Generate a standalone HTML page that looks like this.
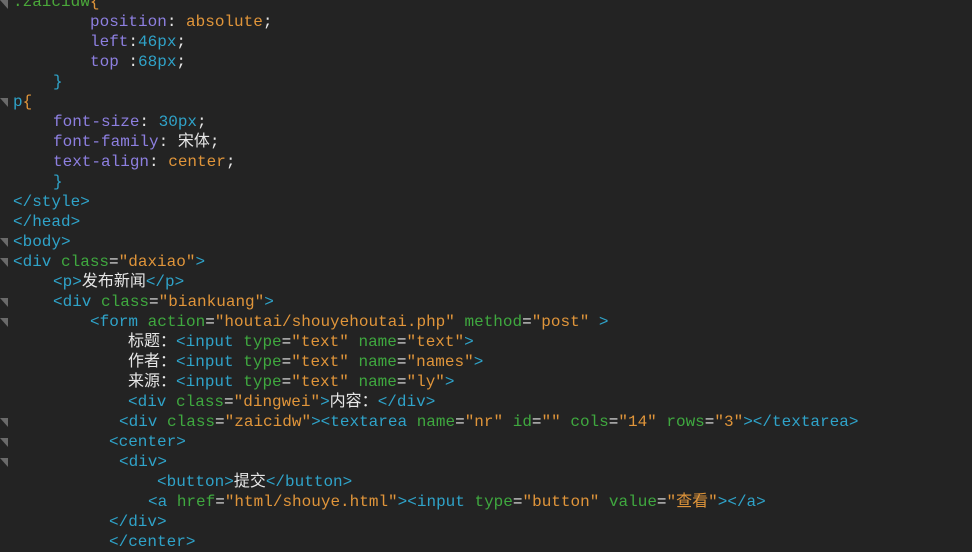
<!DOCTYPE html>
<html><head><meta charset="utf-8"><style>
body{margin:0;width:972px;height:549px;background:#232323;overflow:hidden;position:relative;font-family:"Liberation Mono","Noto Sans CJK SC",monospace;font-size:16px;}
.l{position:absolute;white-space:pre;line-height:20px;height:20px;color:#e6e6e6;}
.t{color:#2fa3c9}.a{color:#3fa83f}.s{color:#e0953a}.p{color:#8d7fe0}.n{color:#2fa3c9}.g{color:#4aa83a}
.f{position:absolute;left:0px;width:0;height:0;border-left:8px solid transparent;border-top:9px solid #6a6a6a;}
</style></head><body>
<div class="l" style="left:13px;top:-8px"><span class="g">.zaicidw</span><span class="s">{</span></div>
<div class="l" style="left:90px;top:12px"><span class="p">position</span>: <span class="s">absolute</span>;</div>
<div class="l" style="left:90px;top:32px"><span class="p">left</span>:<span class="n">46px</span>;</div>
<div class="l" style="left:90px;top:52px"><span class="p">top</span> :<span class="n">68px</span>;</div>
<div class="l" style="left:53px;top:72px"><span class="t">}</span></div>
<div class="l" style="left:13px;top:92px"><span class="t">p</span><span class="s">{</span></div>
<div class="l" style="left:53px;top:112px"><span class="p">font-size</span>: <span class="n">30px</span>;</div>
<div class="l" style="left:53px;top:132px"><span class="p">font-family</span>: 宋体;</div>
<div class="l" style="left:53px;top:152px"><span class="p">text-align</span>: <span class="s">center</span>;</div>
<div class="l" style="left:53px;top:172px"><span class="t">}</span></div>
<div class="l" style="left:13px;top:192px"><span class="t">&lt;/style&gt;</span></div>
<div class="l" style="left:13px;top:212px"><span class="t">&lt;/head&gt;</span></div>
<div class="l" style="left:13px;top:232px"><span class="t">&lt;body&gt;</span></div>
<div class="l" style="left:13px;top:252px"><span class="t">&lt;div </span><span class="a">class</span>=<span class="s">"daxiao"</span><span class="t">&gt;</span></div>
<div class="l" style="left:53px;top:272px"><span class="t">&lt;p&gt;</span>发布新闻<span class="t">&lt;/p&gt;</span></div>
<div class="l" style="left:53px;top:292px"><span class="t">&lt;div </span><span class="a">class</span>=<span class="s">"biankuang"</span><span class="t">&gt;</span></div>
<div class="l" style="left:90px;top:312px"><span class="t">&lt;form </span><span class="a">action</span>=<span class="s">"houtai/shouyehoutai.php"</span> <span class="a">method</span>=<span class="s">"post"</span> <span class="t">&gt;</span></div>
<div class="l" style="left:128px;top:332px">标题：<span class="t">&lt;input </span><span class="a">type</span>=<span class="s">"text"</span> <span class="a">name</span>=<span class="s">"text"</span><span class="t">&gt;</span></div>
<div class="l" style="left:128px;top:352px">作者：<span class="t">&lt;input </span><span class="a">type</span>=<span class="s">"text"</span> <span class="a">name</span>=<span class="s">"names"</span><span class="t">&gt;</span></div>
<div class="l" style="left:128px;top:372px">来源：<span class="t">&lt;input </span><span class="a">type</span>=<span class="s">"text"</span> <span class="a">name</span>=<span class="s">"ly"</span><span class="t">&gt;</span></div>
<div class="l" style="left:128px;top:392px"><span class="t">&lt;div </span><span class="a">class</span>=<span class="s">"dingwei"</span><span class="t">&gt;</span>内容：<span class="t">&lt;/div&gt;</span></div>
<div class="l" style="left:119px;top:412px"><span class="t">&lt;div </span><span class="a">class</span>=<span class="s">"zaicidw"</span><span class="t">&gt;&lt;textarea </span><span class="a">name</span>=<span class="s">"nr"</span> <span class="a">id</span>=<span class="s">""</span> <span class="a">cols</span>=<span class="s">"14"</span> <span class="a">rows</span>=<span class="s">"3"</span><span class="t">&gt;&lt;/textarea&gt;</span></div>
<div class="l" style="left:109px;top:432px"><span class="t">&lt;center&gt;</span></div>
<div class="l" style="left:119px;top:452px"><span class="t">&lt;div&gt;</span></div>
<div class="l" style="left:157px;top:472px"><span class="t">&lt;button&gt;</span>提交<span class="t">&lt;/button&gt;</span></div>
<div class="l" style="left:148px;top:492px"><span class="t">&lt;a </span><span class="a">href</span>=<span class="s">"html/shouye.html"</span><span class="t">&gt;&lt;input </span><span class="a">type</span>=<span class="s">"button"</span> <span class="a">value</span>=<span class="s">"查看"</span><span class="t">&gt;&lt;/a&gt;</span></div>
<div class="l" style="left:109px;top:512px"><span class="t">&lt;/div&gt;</span></div>
<div class="l" style="left:109px;top:532px"><span class="t">&lt;/center&gt;</span></div>
<div class="f" style="top:0px"></div>
<div class="f" style="top:98px"></div>
<div class="f" style="top:238px"></div>
<div class="f" style="top:258px"></div>
<div class="f" style="top:298px"></div>
<div class="f" style="top:318px"></div>
<div class="f" style="top:418px"></div>
<div class="f" style="top:438px"></div>
<div class="f" style="top:458px"></div>
</body></html>
